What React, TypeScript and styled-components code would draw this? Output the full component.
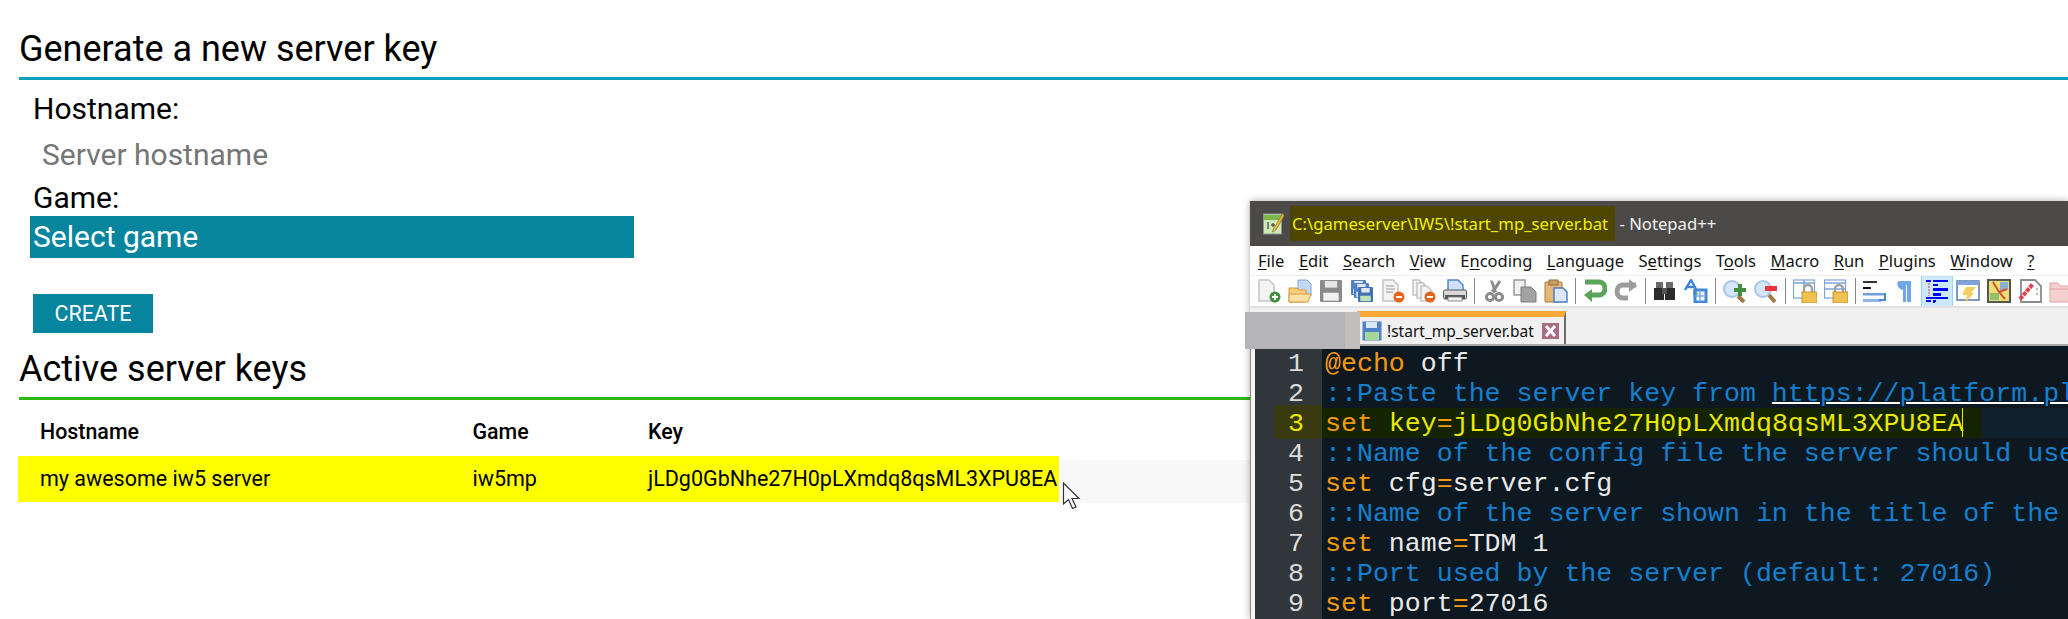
import React from "react";
import styled, { createGlobalStyle } from "styled-components";

const GlobalStyle = createGlobalStyle`
  html, body {
    margin: 0;
    padding: 0;
    background: #fff;
    overflow: hidden;
  }
  body {
    font-family: Roboto, "Liberation Sans", sans-serif;
    color: #000;
  }
`;

const Page = styled.div`
  position: relative;
  width: 2068px;
  height: 619px;
  overflow: hidden;
  padding: 28px 0 0 19px;
  box-sizing: border-box;
`;

const SectionTitle = styled.h2<{ $line: string }>`
  margin: 0;
  height: 52px;
  box-sizing: border-box;
  font-size: 36px;
  line-height: 42px;
  font-weight: 400;
  border-bottom: 3px solid ${(p) => p.$line};
`;

const Form = styled.form`
  display: flex;
  flex-direction: column;
  align-items: flex-start;
  padding-left: 15px;
`;

const FieldLabel = styled.label<{ $gap: number }>`
  margin: ${(p) => p.$gap}px 0 0 -1px;
  font-size: 30px;
  line-height: 34px;
`;

const HostInput = styled.input`
  width: 600px;
  height: 44px;
  padding: 0 8px;
  border: 0;
  margin: 6px 0 0;
  background: transparent;
  font: 400 30px Roboto, sans-serif;
  &::placeholder {
    color: #757575;
    opacity: 1;
  }
`;

const GameSelect = styled.div`
  width: 604px;
  height: 42px;
  margin: 1px 0 0 -4px;
  padding-left: 3px;
  box-sizing: border-box;
  background: #07859e;
  color: #fff;
  font-size: 30px;
  line-height: 42px;
`;

const CreateButton = styled.button`
  width: 120px;
  height: 39px;
  margin: 36px 0 0 -1px;
  padding: 0;
  border: 0;
  background: #07859e;
  color: #fff;
  font: 400 21.5px Roboto, sans-serif;
`;

const KeysSection = styled.section`
  margin-top: 15px;
`;

const TableHead = styled.div`
  display: grid;
  grid-template-columns: 432.5px 175.5px 1fr;
  padding: 18px 0 0 21px;
  height: 42px;
  font-size: 21.4px;
  line-height: 28px;
  font-weight: 500;
`;

const KeyRow = styled.div`
  height: 43px;
  background: #f8f8f8;
`;

const YellowMark = styled.div`
  display: grid;
  grid-template-columns: 432.5px 175.5px 1fr;
  position: relative;
  top: -4px;
  left: -1px;
  width: 1041px;
  height: 46px;
  padding-left: 22px;
  box-sizing: border-box;
  background: #ffff00;
  font-size: 21.5px;
  line-height: 46px;
`;

const Pointer = styled.svg`
  position: absolute;
  left: 1062px;
  top: 482px;
`;

/* notepad++ window sitting on top of the page */
const Win = styled.div`
  position: absolute;
  left: 1250px;
  top: 201px;
  width: 818px;
  height: 418px;
  background: #f0f0f0;
  box-shadow: 0 0 7px rgba(0, 0, 0, 0.35);
  font-family: "Noto Sans", "Open Sans", sans-serif;
`;

const TitleBar = styled.div`
  display: flex;
  align-items: center;
  height: 45px;
  background: #4c4a48;
  padding-left: 13px;
  color: #f2f2f2;
  font-size: 16.7px;
`;

const TitleMark = styled.span`
  display: flex;
  align-items: center;
  height: 35px;
  margin-left: 6px;
  padding: 0 7px 0 2px;
  background: #4d4500;
  color: #f0f000;
`;

const TitleRest = styled.span`
  white-space: pre;
`;

const MenuBar = styled.div`
  display: flex;
  gap: 14.5px;
  height: 29px;
  padding-left: 8px;
  background: #fff;
  font-size: 16.5px;
  line-height: 29px;
  color: #111;
  u {
    text-underline-offset: 2px;
  }
`;

const Toolbar = styled.div`
  display: flex;
  align-items: center;
  gap: 7px;
  height: 32px;
  margin-top: 1px;
  padding-left: 7px;
  box-sizing: border-box;
  background: #fff;
  border-bottom: 2px solid #e2e2e2;
  overflow: hidden;
`;

const ToolSlot = styled.span<{ $active?: boolean }>`
  flex: none;
  display: flex;
  width: 24px;
  height: 26px;
  align-items: center;
  justify-content: center;
  ${(p) =>
    p.$active
      ? `background:#cce8ff; box-shadow:0 0 0 1px #cce8ff inset, 0 0 0 3px #cce8ff, 0 0 0 4px #99d1ff; `
      : ""}
`;

const ToolSep = styled.span`
  flex: none;
  width: 1px;
  height: 26px;
  background: #8a8a8a;
`;

const TabStrip = styled.div`
  height: 38px;
  padding-left: 107px;
  box-sizing: border-box;
  padding-top: 3px;
  border-bottom: 2px solid #a8a8a8;
`;

const Tab = styled.div`
  display: flex;
  align-items: center;
  width: 209px;
  height: 33px;
  box-sizing: border-box;
  padding-left: 5px;
  border-top: 6px solid #fba83a;
  border-right: 2px solid #6a6a6a;
  background: #f0f0f0;
  font-size: 15.5px;
  color: #111;
  gap: 5px;
`;

const Redaction = styled.div`
  position: absolute;
  left: -5px;
  top: 111px;
  width: 115px;
  height: 37px;
  background: linear-gradient(to right, #b4b4b9 100px, #c0bfbd 100px);
`;

const Editor = styled.div`
  display: flex;
  height: 273px;
  box-sizing: border-box;
  margin-left: 5px;
  padding-top: 2px;
  background: #0d1820;
  box-shadow: -4px 0 0 #f6f6f6, -5px 0 0 #8c8c8c;
  font-family: "Liberation Mono", monospace;
  font-size: 26.6px;
  line-height: 32px;
  white-space: pre;
  overflow: hidden;
`;

const Gutter = styled.div`
  flex: none;
  width: 67px;
  margin-top: -2px;
  padding-top: 2px;
  background: #30363a;
  color: #dcdcdc;
`;

const LineNo = styled.div<{ $current?: boolean }>`
  height: 30px;
  padding-left: 33px;
  ${(p) =>
    p.$current
      ? `color:#e8e800; margin:-3px 0 -1px; padding-top:3px; padding-bottom:1px; background:linear-gradient(to right, transparent 20px, #3a3a10 20px);`
      : ""}
`;

const Code = styled.div`
  flex: 1;
  min-width: 0;
  padding-left: 3px;
`;

const CodeLine = styled.div<{ $current?: boolean }>`
  height: 30px;
  ${(p) => (p.$current ? "background:#11202b; margin-left:-3px; padding-left:3px;" : "")}
`;

const CurrentMark = styled.span`
  display: inline-block;
  height: 30px;
  margin-left: -3px;
  padding: 0 18px 0 3px;
  background: #142300;
  position: relative;
  vertical-align: top;
`;

const Caret = styled.i`
  position: absolute;
  right: 18px;
  top: 0;
  width: 1px;
  height: 29px;
  background: #e8e800;
`;

const Kw = styled.span`color: #f59a0c;`;
const Txt = styled.span`color: #eaeaea;`;
const Cm = styled.span`color: #1580cf;`;
const Hot = styled.span`color: #e8e800;`;
const Link = styled.span`
  color: #1580cf;
  text-decoration: underline;
  text-decoration-color: #fff;
  text-decoration-thickness: 2px;
  text-underline-offset: 1px;
`;

const Ico = ({ children, w = 24, h = 24 }: { children: React.ReactNode; w?: number; h?: number }) => (
  <svg width={w} height={h} viewBox={`0 0 ${w} ${h}`}>
    {children}
  </svg>
);

const Doc = ({ x = 3, y = 1, w = 15, h = 20, fill = "#f4f4f4", line = "#c4c4c4" }) => (
  <path d={`M${x} ${y}h${w - 5}l5 5v${h - 5}h-${w}z`} fill={fill} stroke={line} strokeWidth="1.5" />
);

const Minus = ({ x = 17, y = 18 }) => (
  <g>
    <circle cx={x} cy={y} r="5.5" fill="#e2661a" />
    <rect x={x - 3} y={y - 1} width="6" height="2" fill="#fff" />
  </g>
);

const Floppy = ({ x = 1, y = 1, s = 22, c = "#8a8a8a", label = "#f2f2f2" }) => (
  <g>
    <rect x={x} y={y} width={s} height={s} rx="1" fill={c} />
    <rect x={x + s * 0.22} y={y + 1} width={s * 0.56} height={s * 0.3} fill="#e6e6e6" />
    <rect x={x + s * 0.15} y={y + s * 0.58} width={s * 0.7} height={s * 0.36} fill={label} />
  </g>
);

const tools: React.ReactNode[] = [
  <Ico key="new">
    <Doc x={2} y={1} h={21} />
    <circle cx="18" cy="18" r="5.5" fill="#3e8e3e" />
    <path d="M18 15v6M15 18h6" stroke="#fff" strokeWidth="2" />
  </Ico>,
  <Ico key="open">
    <path d="M10 1h9l4 4v12H10z" fill="#c4d8f4" stroke="#7ea4dc" />
    <path d="M1 9h8l2 2h7v12H1z" fill="#f8cf78" stroke="#d49a3c" />
    <path d="M1 15h22l-3 8H1z" fill="#fbe2a4" stroke="#d49a3c" />
  </Ico>,
  <Ico key="save">
    <Floppy />
  </Ico>,
  <Ico key="saveall">
    <Floppy x={1} y={1} s={15} c="#4f7fc4" label="#dce8f8" />
    <Floppy x={4} y={4} s={15} c="#4f7fc4" label="#dce8f8" />
    <Floppy x={8} y={8} s={15} c="#3f70b8" label="#bfe4b4" />
  </Ico>,
  <Ico key="close">
    <Doc x={2} y={1} h={21} />
    <path d="M5 7h8M5 10h9M5 13h7" stroke="#b8b8b8" strokeWidth="1.4" />
    <Minus x={18} y={18} />
  </Ico>,
  <Ico key="closeall">
    <Doc x={1} y={1} w={11} h={15} />
    <Doc x={5} y={4} w={11} h={15} />
    <Doc x={9} y={7} w={11} h={15} />
    <Minus x={18} y={18} />
  </Ico>,
  <Ico key="print">
    <path d="M5 1h10l5 5v6H5z" fill="#cfe0f8" stroke="#4f8ad8" strokeWidth="1.5" />
    <rect x="0.5" y="11" width="23" height="9" rx="1.5" fill="#d8d8d8" stroke="#555" />
    <rect x="2" y="16" width="20" height="4" fill="#555" />
    <rect x="5" y="18" width="14" height="4" fill="#eee" stroke="#777" strokeWidth=".8" />
  </Ico>,
  "sep",
  <Ico key="cut">
    <path d="M17 1l2 2-7 11-3-2zM8 1l3 1 4 11-3 1z" fill="#8c8c8c" />
    <circle cx="8" cy="18" r="3.6" fill="none" stroke="#8c8c8c" strokeWidth="3" />
    <circle cx="17" cy="18" r="3.6" fill="none" stroke="#8c8c8c" strokeWidth="3" />
  </Ico>,
  <Ico key="copy">
    <path d="M1 1h11v15H1z" fill="#f0f0f0" stroke="#9a9a9a" strokeWidth="1.5" />
    <path d="M8 8h10l5 5v10H8z" fill="#a2a2a2" stroke="#7e7e7e" />
  </Ico>,
  <Ico key="paste">
    <rect x="1" y="3" width="17" height="20" rx="1" fill="#e6b878" stroke="#a67b3e" />
    <rect x="5" y="1" width="9" height="5" fill="#c9a064" stroke="#8c6a34" />
    <path d="M10 9h9l4 4v10H10z" fill="#dce8fa" stroke="#4f7fc8" strokeWidth="1.5" />
  </Ico>,
  "sep",
  <Ico key="undo">
    <path d="M2 3h14c8 0 8 13 0 13H8" fill="none" stroke="#5aa55a" strokeWidth="5" />
    <path d="M9 10v13L1 16z" fill="#5aa55a" />
  </Ico>,
  <Ico key="redo">
    <path d="M22 6H9c-8 0-8 13 0 13h5" fill="none" stroke="#9c9c9c" strokeWidth="5" />
    <path d="M15 0v13l8-6z" fill="#9c9c9c" />
  </Ico>,
  "sep",
  <Ico key="find">
    <rect x="3" y="3" width="7" height="7" fill="#6a6a6a" />
    <rect x="13" y="3" width="7" height="7" fill="#6a6a6a" />
    <rect x="1" y="9" width="10" height="12" fill="#2c2c2c" />
    <rect x="12" y="9" width="10" height="12" fill="#2c2c2c" />
    <rect x="9" y="9" width="5" height="6" fill="#555" />
  </Ico>,
  <Ico key="replace">
    <path d="M1 11L7 1l5 9M3.5 8h7" fill="none" stroke="#3d86d8" strokeWidth="2.4" />
    <path d="M9 10l6 5-6 3z" fill="#8cc48c" />
    <rect x="11" y="11" width="11" height="12" fill="none" stroke="#3d86d8" strokeWidth="3" />
    <path d="M11 17h11M16 11v12" stroke="#7aa8e4" strokeWidth="1.5" />
  </Ico>,
  "sep",
  <Ico key="zoomin">
    <circle cx="9" cy="10" r="8" fill="#d6e6f8" stroke="#a8c4e8" strokeWidth="2" />
    <path d="M15 17l6 6" stroke="#a57a48" strokeWidth="4" />
    <rect x="11" y="9" width="12" height="4" fill="#3f8f3f" />
    <rect x="15" y="5" width="4" height="12" fill="#3f8f3f" />
  </Ico>,
  <Ico key="zoomout">
    <circle cx="9" cy="10" r="8" fill="#d6e6f8" stroke="#a8c4e8" strokeWidth="2" />
    <path d="M15 16l6 7" stroke="#a57a48" strokeWidth="4" />
    <rect x="11" y="7" width="12" height="5" fill="#e8343c" />
  </Ico>,
  "sep",
  <Ico key="syncv">
    <rect x=".5" y="1" width="21" height="18" fill="#fff" stroke="#7ea4dc" strokeWidth="1.2" />
    <path d="M0 4h22M11 1v18" stroke="#7ea4dc" strokeWidth="1.6" />
    <path d="M11 13v-3a4 4 0 0 1 8 0v3" fill="none" stroke="#a0a0a0" strokeWidth="2.4" />
    <rect x="9" y="13" width="15" height="11" fill="#f0c050" stroke="#c89430" />
  </Ico>,
  <Ico key="synch">
    <rect x=".5" y="1" width="21" height="18" fill="#fff" stroke="#7ea4dc" strokeWidth="1.2" />
    <path d="M0 4h22M0 10h22" stroke="#7ea4dc" strokeWidth="1.6" />
    <path d="M11 13v-3a4 4 0 0 1 8 0v3" fill="none" stroke="#a0a0a0" strokeWidth="2.4" />
    <rect x="9" y="13" width="15" height="11" fill="#f0c050" stroke="#c89430" />
  </Ico>,
  "sep",
  <Ico key="wrap">
    <rect x="0" y="2" width="14" height="2" fill="#333" />
    <rect x="0" y="8" width="8" height="2" fill="#111" />
    <rect x="0" y="14" width="22" height="2.5" fill="#6f9fdc" />
    <rect x="0" y="20" width="18" height="3" fill="#8fb6e8" />
    <path d="M22 14v7h-6" fill="none" stroke="#4b86d0" strokeWidth="2" />
  </Ico>,
  <Ico key="pilcrow">
    <path d="M5 2h12v21h-4V6h-1v17H9V11C3 10 2 3 5 2z" fill="#6ea6e8" />
  </Ico>,
  "guide",
  <Ico key="monitor">
    <rect x="1" y="2" width="22" height="19" fill="#fff" stroke="#5f7fae" strokeWidth="1.6" />
    <rect x="1" y="2" width="22" height="4" fill="#7ea4dc" />
    <path d="M10 8h10l-5 6h3l-9 10 2-8H6z" fill="#f2d060" />
  </Ico>,
  <Ico key="map">
    <rect x="1" y="1" width="22" height="22" fill="#e8e070" stroke="#555" strokeWidth="2" />
    <rect x="13" y="3" width="8" height="8" fill="#8ab0d0" />
    <rect x="3" y="14" width="9" height="7" fill="#90c070" />
    <path d="M6 3l6 10 6 7M12 13l8-3" fill="none" stroke="#d8503c" strokeWidth="2" />
  </Ico>,
  <Ico key="func">
    <path d="M3 1h14l6 6v16H3z" fill="#fff" stroke="#8c8c8c" strokeWidth="1.8" />
    <path d="M2 20L15 5" stroke="#e0404c" strokeWidth="4" strokeDasharray="4 1" />
    <path d="M19 9v9" stroke="#a8c8a0" strokeWidth="2" strokeDasharray="2 3" />
  </Ico>,
  <Ico key="folder">
    <path d="M1 4h8l2 3h12v16H1z" fill="#f4d0d0" stroke="#e0a0a0" />
    <path d="M1 10h22" stroke="#e0a0a0" />
  </Ico>,
];

const IndentGuide = () => (
  <svg width="22" height="24" viewBox="0 0 22 24" style={{ flex: "none" }}>
    <g fill="#0000ff">
      <rect x="0" y="1" width="5" height="2" />
      <rect x="7" y="1" width="15" height="2" />
      <rect x="7" y="5" width="5" height="2" />
      <rect x="7" y="9" width="15" height="3" />
      <rect x="7" y="14" width="8" height="3" />
      <rect x="0" y="18" width="22" height="2" />
      <rect x="0" y="21" width="5" height="2" />
      <rect x="7" y="21" width="3" height="2" />
      <rect x="7" y="23" width="2" height="1" />
    </g>
    <path d="M3 4v13" stroke="#e0303c" strokeWidth="1" strokeDasharray="2 1" />
  </svg>
);

const NppIcon = () => (
  <svg width="21" height="23" viewBox="0 0 21 23">
    <rect x="0.5" y="2" width="18" height="20" fill="#cfe8b8" stroke="#8a9a80" />
    <rect x="1" y="3" width="17" height="5" fill="#7ab648" />
    <path d="M5 10v7M8 13h4M10 11v4" stroke="#555" strokeWidth="1.4" />
    <path d="M20 1L11 16l-2 4 4-2L21 4z" fill="#e8b83c" stroke="#8a6a20" strokeWidth=".6" />
  </svg>
);

const TabSave = () => (
  <svg width="20" height="20" viewBox="0 0 20 20">
    <rect x="0.5" y="0.5" width="19" height="19" fill="#4f82c8" />
    <rect x="4" y="1" width="11" height="6" fill="#dce8f8" />
    <rect x="3" y="11" width="14" height="8" fill="#a6d69a" />
  </svg>
);

const TabClose = () => (
  <svg width="17" height="16" viewBox="0 0 17 16" style={{ marginLeft: 3 }}>
    <rect width="17" height="16" fill="#a86b85" />
    <path d="M4 3l9 10M13 3L4 13" stroke="#fff" strokeWidth="3" />
  </svg>
);

const menus: [string, string, string][] = [
  ["", "F", "ile"],
  ["", "E", "dit"],
  ["", "S", "earch"],
  ["", "V", "iew"],
  ["E", "n", "coding"],
  ["", "L", "anguage"],
  ["S", "e", "ttings"],
  ["T", "o", "ols"],
  ["", "M", "acro"],
  ["", "R", "un"],
  ["", "P", "lugins"],
  ["", "W", "indow"],
  ["", "?", ""],
];

export default function App() {
  return (
    <>
      <GlobalStyle />
      <Page>
        <SectionTitle $line="#0aa0bc">Generate a new server key</SectionTitle>
        <Form>
          <FieldLabel $gap={12}>Hostname:</FieldLabel>
          <HostInput placeholder="Server hostname" />
          <FieldLabel $gap={5}>Game:</FieldLabel>
          <GameSelect>Select game</GameSelect>
          <CreateButton type="button">CREATE</CreateButton>
        </Form>

        <KeysSection>
          <SectionTitle $line="#2eb80e">Active server keys</SectionTitle>
          <TableHead>
            <span>Hostname</span>
            <span>Game</span>
            <span>Key</span>
          </TableHead>
          <KeyRow>
            <YellowMark>
              <span>my awesome iw5 server</span>
              <span>iw5mp</span>
              <span>jLDg0GbNhe27H0pLXmdq8qsML3XPU8EA</span>
            </YellowMark>
          </KeyRow>
        </KeysSection>

        <Pointer width="20" height="28" viewBox="0 0 20 28">
          <path d="M1.5 1v21l5-4.5 4 9 3.500-1.500-4-8.500h7z" fill="#fff" stroke="#333" strokeWidth="1.2" />
        </Pointer>

        <Win>
          <TitleBar>
            <NppIcon />
            <TitleMark>C:\gameserver\IW5\!start_mp_server.bat</TitleMark>
            <TitleRest> - Notepad++</TitleRest>
          </TitleBar>
          <MenuBar>
            {menus.map(([before, key, after]) => (
              <span key={before + key + after}>
                {before}
                <u>{key}</u>
                {after}
              </span>
            ))}
          </MenuBar>
          <Toolbar>
            {tools.map((tool, i) =>
              tool === "sep" ? (
                <ToolSep key={i} />
              ) : tool === "guide" ? (
                <ToolSlot key={i} $active>
                  <IndentGuide />
                </ToolSlot>
              ) : (
                <ToolSlot key={i}>{tool}</ToolSlot>
              )
            )}
          </Toolbar>
          <TabStrip>
            <Tab>
              <TabSave />
              <span>!start_mp_server.bat</span>
              <TabClose />
            </Tab>
          </TabStrip>
          <Redaction />
          <Editor>
            <Gutter>
              {[1, 2, 3, 4, 5, 6, 7, 8, 9].map((n) => (
                <LineNo key={n} $current={n === 3}>
                  {n}
                </LineNo>
              ))}
            </Gutter>
            <Code>
              <CodeLine>
                <Kw>@echo</Kw>
                <Txt> off</Txt>
              </CodeLine>
              <CodeLine>
                <Cm>::Paste the server key from </Cm>
                <Link>https://platform.pl</Link>
              </CodeLine>
              <CodeLine $current>
                <CurrentMark>
                  <Kw>set</Kw>
                  <Hot> key</Hot>
                  <Kw>=</Kw>
                  <Hot>jLDg0GbNhe27H0pLXmdq8qsML3XPU8EA</Hot>
                  <Caret />
                </CurrentMark>
              </CodeLine>
              <CodeLine>
                <Cm>::Name of the config file the server should use</Cm>
              </CodeLine>
              <CodeLine>
                <Kw>set</Kw>
                <Txt> cfg</Txt>
                <Kw>=</Kw>
                <Txt>server.cfg</Txt>
              </CodeLine>
              <CodeLine>
                <Cm>::Name of the server shown in the title of the</Cm>
              </CodeLine>
              <CodeLine>
                <Kw>set</Kw>
                <Txt> name</Txt>
                <Kw>=</Kw>
                <Txt>TDM 1</Txt>
              </CodeLine>
              <CodeLine>
                <Cm>::Port used by the server (default: 27016)</Cm>
              </CodeLine>
              <CodeLine>
                <Kw>set</Kw>
                <Txt> port</Txt>
                <Kw>=</Kw>
                <Txt>27016</Txt>
              </CodeLine>
            </Code>
          </Editor>
        </Win>
      </Page>
    </>
  );
}
